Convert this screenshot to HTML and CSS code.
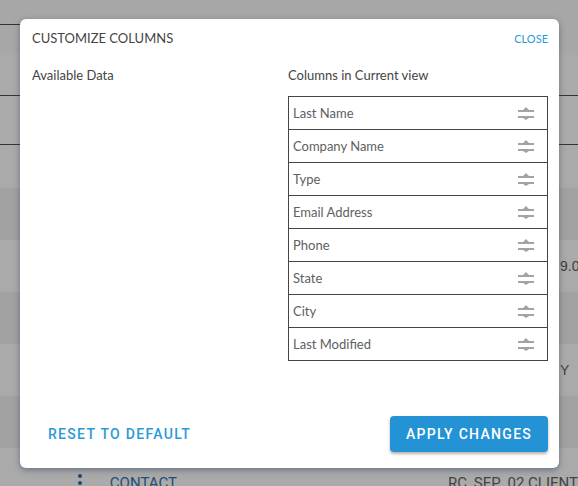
FILE: index.html
```html
<!DOCTYPE html>
<html>
<head>
    <title>Customize Columns</title>
    <link rel="stylesheet" href="styles.css">
</head>
<body>
    <div class="page">
        <div class="bg-row bg-head"><span class="bg-line"></span></div>
        <div class="bg-row bg-sub"></div>
        <div class="bg-row bg-light bg-first"></div>
        <div class="bg-row bg-dark"></div>
        <div class="bg-row bg-light"><span class="bg-text">9.0</span></div>
        <div class="bg-row bg-dark"></div>
        <div class="bg-row bg-light"><span class="bg-text">Y</span></div>
        <div class="bg-row bg-dark"></div>
        <div class="bg-row bg-light bg-last">
            <span class="kebab"><i></i><i></i><i></i></span>
            <span class="bg-link">CONTACT</span>
            <span class="bg-client">RC_SEP_02 CLIENT</span>
        </div>
    </div>

    <div class="modal">
        <div class="modal-head">
            <span class="modal-title">CUSTOMIZE COLUMNS</span>
            <a class="close-link">CLOSE</a>
        </div>

        <div class="modal-body">
            <div class="col">
                <div class="col-label">Available Data</div>
            </div>
            <div class="col">
                <div class="col-label">Columns in Current view</div>
                <table class="col-table">
                    <tr><td>Last Name</td><td class="handle"><svg width="16" height="13" viewBox="0 0 16 13"><path d="M5 3L8 0L11 3Z M0 3H16V5H0Z M0 9H16V11H0Z M5 11L8 13L11 11Z" fill="#a3a3a3"/></svg></td></tr>
                    <tr><td>Company Name</td><td class="handle"><svg width="16" height="13" viewBox="0 0 16 13"><path d="M5 3L8 0L11 3Z M0 3H16V5H0Z M0 9H16V11H0Z M5 11L8 13L11 11Z" fill="#a3a3a3"/></svg></td></tr>
                    <tr><td>Type</td><td class="handle"><svg width="16" height="13" viewBox="0 0 16 13"><path d="M5 3L8 0L11 3Z M0 3H16V5H0Z M0 9H16V11H0Z M5 11L8 13L11 11Z" fill="#a3a3a3"/></svg></td></tr>
                    <tr><td>Email Address</td><td class="handle"><svg width="16" height="13" viewBox="0 0 16 13"><path d="M5 3L8 0L11 3Z M0 3H16V5H0Z M0 9H16V11H0Z M5 11L8 13L11 11Z" fill="#a3a3a3"/></svg></td></tr>
                    <tr><td>Phone</td><td class="handle"><svg width="16" height="13" viewBox="0 0 16 13"><path d="M5 3L8 0L11 3Z M0 3H16V5H0Z M0 9H16V11H0Z M5 11L8 13L11 11Z" fill="#a3a3a3"/></svg></td></tr>
                    <tr><td>State</td><td class="handle"><svg width="16" height="13" viewBox="0 0 16 13"><path d="M5 3L8 0L11 3Z M0 3H16V5H0Z M0 9H16V11H0Z M5 11L8 13L11 11Z" fill="#a3a3a3"/></svg></td></tr>
                    <tr><td>City</td><td class="handle"><svg width="16" height="13" viewBox="0 0 16 13"><path d="M5 3L8 0L11 3Z M0 3H16V5H0Z M0 9H16V11H0Z M5 11L8 13L11 11Z" fill="#a3a3a3"/></svg></td></tr>
                    <tr><td>Last Modified</td><td class="handle"><svg width="16" height="13" viewBox="0 0 16 13"><path d="M5 3L8 0L11 3Z M0 3H16V5H0Z M0 9H16V11H0Z M5 11L8 13L11 11Z" fill="#a3a3a3"/></svg></td></tr>
                </table>
            </div>
        </div>

        <div class="modal-foot">
            <button class="btn-text">RESET TO DEFAULT</button>
            <button class="btn-apply">APPLY CHANGES</button>
        </div>
    </div>
</body>
</html>
```

FILE: styles.css
```css
body {
    margin: 0;
    font-family: Lato, "Noto Sans", sans-serif;
    background-color: #aaaaaa;
    overflow: hidden;
}
.page {
    width: 578px;
    height: 486px;
    overflow: hidden;
}
.bg-row {
    position: relative;
    box-sizing: border-box;
}
.bg-head {
    height: 53px;
    background-color: #a7a7a7;
}
.bg-line {
    position: absolute;
    left: 0;
    top: 24px;
    width: 40px;
    border-top: 1px solid #333;
}
.bg-sub {
    height: 92px;
    background-color: #aaaaaa;
    border-top: 42px solid #aaaaaa;
    box-shadow: inset 0 1px 0 #333, inset 0 -1px 0 #333;
}
.bg-light {
    height: 52px;
    background-color: #aaaaaa;
    padding-left: 560px;
}
.bg-first {
    height: 43px;
}
.bg-dark {
    height: 52px;
    background-color: #a2a2a2;
}
.bg-text {
    display: block;
    line-height: 52px;
    font-family: "Liberation Sans", sans-serif;
    font-size: 14px;
    color: #404040;
}
.bg-last {
    height: 38px;
    padding-left: 78px;
    display: flex;
    align-items: flex-start;
}
.kebab {
    display: flex;
    flex-direction: column;
    gap: 3px;
    padding-top: 26px;
    width: 32px;
}
.kebab i {
    display: block;
    width: 4px;
    height: 4px;
    border-radius: 50%;
    background-color: #1e4a6e;
}
.bg-link {
    padding-top: 27px;
    width: 340px;
    font-family: Roboto, sans-serif;
    font-size: 15px;
    line-height: 16px;
    color: #1f4f75;
}
.bg-client {
    padding-top: 27px;
    font-family: Roboto, sans-serif;
    font-size: 15px;
    line-height: 16px;
    color: #444;
    white-space: nowrap;
}

.modal {
    position: absolute;
    left: 20px;
    top: 19px;
    width: 539px;
    height: 449px;
    box-sizing: border-box;
    padding: 11px 11px 16px 12px;
    background-color: #fff;
    border-radius: 6px;
    box-shadow: 0 2px 6px rgba(50, 70, 95, 0.55);
    display: flex;
    flex-direction: column;
}
.modal-head {
    display: flex;
    justify-content: space-between;
    align-items: center;
    height: 16px;
}
.modal-title {
    font-size: 13px;
    color: #444;
}
.close-link {
    font-size: 11px;
    color: #2a9ad8;
}
.modal-body {
    flex: 1;
    display: grid;
    grid-template-columns: 256px 260px;
    margin-top: 21px;
}
.col-label {
    font-size: 13px;
    line-height: 16px;
    color: #444;
    margin-bottom: 13px;
}
.col-table {
    width: 260px;
    border-collapse: collapse;
}
.col-table td {
    height: 32px;
    padding: 0 0 0 4px;
    border-top: 1px solid #444;
    border-bottom: 1px solid #444;
    font-size: 13px;
    line-height: 16px;
    color: #606060;
    vertical-align: middle;
}
.col-table td:first-child {
    border-left: 1px solid #444;
}
.col-table td.handle {
    width: 16px;
    padding: 0 13px 0 0;
    border-right: 1px solid #444;
}
.col-table svg {
    display: block;
}
.modal-foot {
    display: flex;
    justify-content: space-between;
    align-items: center;
}
.btn-text {
    font-family: Roboto, sans-serif;
    font-weight: 500;
    font-size: 14px;
    letter-spacing: 1.3px;
    color: #2a9ad8;
    background: none;
    border: none;
    padding: 0 16px;
}
.btn-apply {
    width: 158px;
    height: 36px;
    font-family: Roboto, sans-serif;
    font-weight: 500;
    font-size: 14px;
    letter-spacing: 1.3px;
    color: #fff;
    background-color: #2393d6;
    border: none;
    border-radius: 4px;
    box-shadow: 0 2px 3px rgba(0, 0, 0, 0.3);
}
```
